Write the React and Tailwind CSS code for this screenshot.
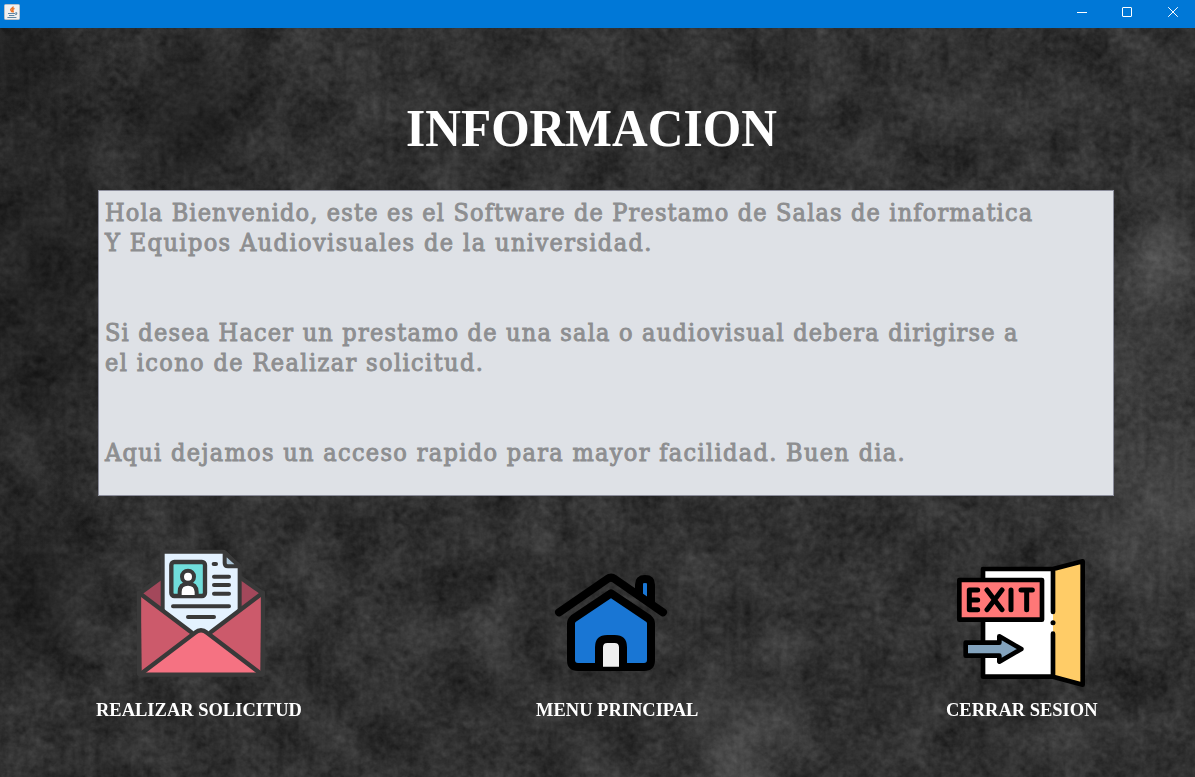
import React from "react";

function Texture() {
  return (
    <svg className="absolute inset-0 h-full w-full" width="1195" height="749" viewBox="0 0 1195 749" preserveAspectRatio="none" aria-hidden="true">
      <defs>
        <filter id="grunge" x="0" y="0" width="100%" height="100%" colorInterpolationFilters="sRGB">
          <feTurbulence type="fractalNoise" baseFrequency="0.021 0.019" numOctaves="6" seed="21" result="c" />
          <feColorMatrix in="c" type="matrix" values="0.15 0.09 0 0 0  0.15 0.09 0 0 0  0.15 0.09 0 0 0  0 0 0 0 1" result="cg" />
          <feTurbulence type="fractalNoise" baseFrequency="0.137" numOctaves="3" seed="3" result="f" />
          <feColorMatrix in="f" type="matrix" values="0.1 0.08 0 0 0  0.1 0.08 0 0 0  0.1 0.08 0 0 0  0 0 0 0 1" result="fg" />
          <feComposite in="cg" in2="fg" operator="arithmetic" k1="0" k2="1" k3="1" k4="-0.02" result="sum" />
          <feColorMatrix in="sum" type="matrix" values="1 0 0 0 0  0 1 0 0 0  0 0 1 0 0  0 0 0 0 1" />
        </filter>
        <radialGradient id="dark"><stop offset="0" stopColor="#000" stopOpacity=".34" /><stop offset="1" stopColor="#000" stopOpacity="0" /></radialGradient>
        <radialGradient id="light"><stop offset="0" stopColor="#fff" stopOpacity=".12" /><stop offset="1" stopColor="#fff" stopOpacity="0" /></radialGradient>
      </defs>
      <rect width="1195" height="749" filter="url(#grunge)" />
      <ellipse cx="30" cy="250" rx="150" ry="280" fill="url(#dark)" />
      <ellipse cx="190" cy="90" rx="90" ry="120" fill="url(#dark)" />
      <ellipse cx="0" cy="20" rx="120" ry="80" fill="url(#dark)" />
      <ellipse cx="20" cy="560" rx="120" ry="130" fill="url(#dark)" />
      <ellipse cx="1165" cy="470" rx="120" ry="130" fill="url(#light)" />
      <ellipse cx="740" cy="710" rx="80" ry="110" fill="url(#light)" />
      <ellipse cx="1155" cy="250" rx="60" ry="150" fill="url(#light)" />
    </svg>
  );
}

function JavaIcon() {
  return (
    <svg className="ml-1 h-4 w-4" viewBox="0 0 16 16" fill="none">
      <rect x=".5" y=".5" width="15" height="15" rx="1" fill="#f1f1f1" stroke="#b9c1c9" />
      <path d="M9 2.500C9.800 4.200 5.500 4.800 7.100 6.600c.4.6.9.9 1 1.600M10.500 4.300C8.700 5.200 8.200 5.800 9.100 7c.4.600 0 1-.4 1.500" stroke="#e9742a" strokeWidth="1.500" />
      <path d="M4 9.500h7.400M5 11.500h5.400M3.400 13.500h9M11.400 8.800c1.900-.5 1.900 1.500-.2 2" stroke="#5f86a3" strokeWidth="1.100" />
    </svg>
  );
}

function TitleBar() {
  return (
    <header className="flex h-7 shrink-0 items-start justify-between bg-[#0078d7] pt-1">
      <JavaIcon />
      <div className="flex h-4">
        <svg className="h-4 w-[46px]" viewBox="0 0 46 16"><path d="M19 8.500h10" stroke="#fff" /></svg>
        <svg className="h-4 w-[46px]" viewBox="0 0 46 16"><rect x="18.500" y="3.500" width="9" height="9" rx=".5" fill="none" stroke="#fff" /></svg>
        <svg className="h-4 w-[45px]" viewBox="0 0 45 16"><path d="M18.200 3.200l9.600 9.600m0-9.600l-9.600 9.600" stroke="#fff" /></svg>
      </div>
    </header>
  );
}

function LetterIcon() {
  return (
    <svg className="h-[150px] w-[150px]" viewBox="0 0 450 450" strokeLinejoin="round" strokeLinecap="round">
      <path d="M47 158L110 112H345L411 158V402H47Z" fill="#a3485b" stroke="#393939" strokeWidth="13" />
      <path d="M113 230V41q0-6 6-6H297L344 80V225L228 300Z" fill="#e4f2ff" stroke="#393939" strokeWidth="12" />
      <path d="M299 38L344 79H309q-10 0-10-10Z" fill="#abc4d6" stroke="#393939" strokeWidth="12" />
      <path d="M47 164L205 282L50 400Z" fill="#cc5a6b" />
      <path d="M409 164L251 282L406 400Z" fill="#cc5a6b" />
      <path d="M52 400L210 278q18-14 36 0L404 400Z" fill="#f57282" />
      <path d="M47 162L198 276M409 162L258 276M54 397L210 278q18-14 36 0L402 397" fill="none" stroke="#393939" strokeWidth="13" />
      <path d="M42 158V399q0 5 5 5H409q5 0 5-5V158" fill="none" stroke="#393939" strokeWidth="13" />
      <rect x="139" y="66" width="101" height="102" rx="9" fill="#70dddb" stroke="#393939" strokeWidth="13" />
      <path d="M164 165V156q0-25 25-25t26 25v9" fill="#fff" stroke="#393939" strokeWidth="12" />
      <circle cx="189" cy="110" r="18" fill="#fff" stroke="#393939" strokeWidth="12" />
      <path d="M266 72h7M267 110h45M267 135h45M267 161h45M144 199h168M189 231h78" fill="none" stroke="#393939" strokeWidth="12" />
    </svg>
  );
}

function HouseIcon() {
  return (
    <svg className="h-[125px] w-[140px]" viewBox="0 0 420 375" stroke="#000" strokeWidth="24" strokeLinecap="round" strokeLinejoin="round">
      <path d="M297 105V74q0-17 18-17t18 17v52" fill="#1976d4" />
      <path d="M57 157L202 57q11-8 22 0L369 157" fill="none" />
      <path d="M93 190q0-8 7-14L213 100l113 76q7 6 7 14V300q0 21-21 21H114q-21 0-21-21Z" fill="#1976d4" />
      <path d="M177 320V262q0-25 25-25h22q25 0 25 25v58" fill="#efefef" />
    </svg>
  );
}

function ExitIcon() {
  return (
    <svg className="h-[145px] w-[150px]" viewBox="0 0 450 435" stroke="#000" strokeWidth="14" strokeLinecap="round" strokeLinejoin="round">
      <path d="M114 57H324V380H114Z" fill="#fff" stroke="none" />
      <path d="M324 57L413 34V404L324 380Z" fill="#ffcc67" stroke="none" />
      <path d="M324 186V57L413 34V404L324 380V251M324 57H114V380H324" fill="none" />
      <path d="M324 218.500h.1" strokeWidth="15" />
      <path d="M43 90H291V209H43Z" fill="#ff7777" />
      <path d="M62 278H163V259L229 297L163 335V317H62Z" fill="#83a3bd" />
      <path d="M98 120H73V179H98M73 150H98M126 120L171 179M171 120L126 179M198 120V179M228 120H262M245 120V179" fill="none" strokeWidth="15" />
    </svg>
  );
}

const label = "origin-left scale-x-[0.948] whitespace-nowrap text-[19.500px] leading-6";

export default function App() {
  return (
    <div className="flex h-[777px] w-[1195px] flex-col overflow-hidden bg-[#2e2e2e] font-['Liberation_Serif',serif] font-bold text-white">
      <TitleBar />
      <main className="relative isolate flex-1">
        <Texture />
        <div className="relative flex h-full flex-col">
          <h1 className="ml-[406px] mt-[68px] h-[94px] origin-left scale-x-[0.933] whitespace-nowrap text-[53px] leading-[64px]">INFORMACION</h1>
          <section className="ml-[98px] h-[306px] w-[1016px] shrink-0 whitespace-nowrap border border-[#8c8e9c] bg-[#dee1e6] pl-[6px] pt-[7px] font-['DejaVu_Serif_Condensed','DejaVu_Serif',serif] text-[25px] font-normal leading-[30px] text-[#8d8e90] [-webkit-text-stroke:0.9px_#8d8e90]">
            <p className="tracking-[1.15px]">Hola Bienvenido, este es el Software de Prestamo de Salas de informatica</p>
            <p className="tracking-[1.4px]">Y Equipos Audiovisuales de la universidad.</p>
            <p className="mt-[60px] tracking-[1.2px]">Si desea Hacer un prestamo de una sala o audiovisual debera dirigirse a</p>
            <p className="tracking-[1.38px]">el icono de Realizar solicitud.</p>
            <p className="mt-[60px] tracking-[1.32px]">Aqui dejamos un acceso rapido para mayor facilidad. Buen dia.</p>
          </section>
          <nav className="mt-11 flex items-start justify-between pl-24 pr-[97px]">
            <button className="flex w-[206px] flex-col items-start">
              <span className="ml-[29px] h-[158px]"><LetterIcon /></span>
              <span className={label}>REALIZAR SOLICITUD</span>
            </button>
            <button className="-ml-[12px] flex w-[164px] flex-col items-start">
              <span className="ml-1 h-[158px] pt-5"><HouseIcon /></span>
              <span className={label}>MENU PRINCIPAL</span>
            </button>
            <button className="flex w-[152px] flex-col items-start">
              <span className="-ml-px h-[158px] pt-[10px]"><ExitIcon /></span>
              <span className={label}>CERRAR SESION</span>
            </button>
          </nav>
        </div>
      </main>
    </div>
  );
}
